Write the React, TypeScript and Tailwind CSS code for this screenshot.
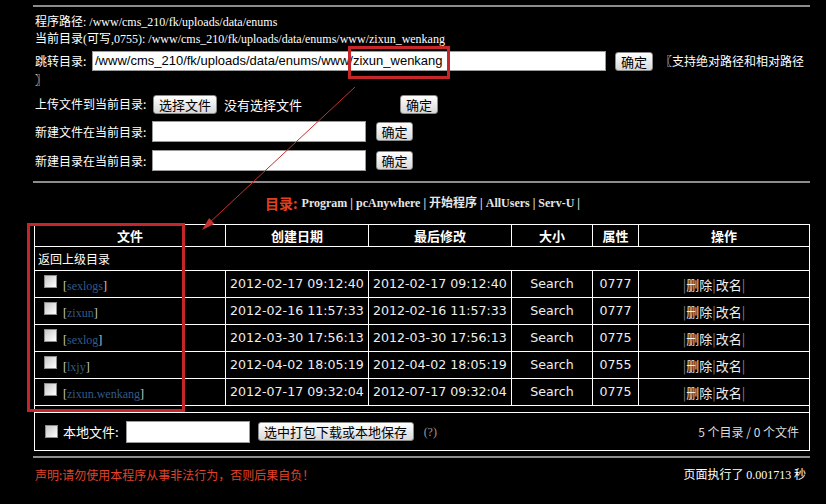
const rows = [
  { name: "sexlogs", date: "2012-02-17 09:12:40", mode: "0777" },
  { name: "zixun", date: "2012-02-16 11:57:33", mode: "0777" },
  { name: "sexlog", date: "2012-03-30 17:56:13", mode: "0775" },
  { name: "lxjy", date: "2012-04-02 18:05:19", mode: "0755" },
  { name: "zixun.wenkang", date: "2012-07-17 09:32:04", mode: "0775" },
];

const Btn = ({ children, w }: { children: string; w: string }) => (
  <button
    className={`${w} h-[19px] rounded-[3px] border border-[#8a8a8a] bg-gradient-to-b from-white to-[#d8d8d8] text-center font-['Noto_Sans_CJK_SC',sans-serif] text-[13px] leading-none text-black`}
  >
    {children}
  </button>
);

const Check = () => (
  <span className="inline-block h-[13px] w-[13px] border border-[#8c8c8c] bg-gradient-to-br from-[#c8c8c8] to-white" />
);

export default function App() {
  return (
    <div className="relative h-[504px] w-[826px] overflow-hidden bg-black font-['Noto_Sans_CJK_SC',sans-serif] text-[12px] text-white">
      <div className="ml-[33px] w-[777px] pt-[5px]">
        <div className="h-[2px] bg-[#8c8c8c]" />

        {/* PATH INFO */}
        <div className="pl-[2px] pt-[7px] font-['Liberation_Serif','Noto_Sans_CJK_SC',serif] text-[12px] leading-[17px]">
          <div>程序路径: /www/cms_210/fk/uploads/data/enums</div>
          <div>当前目录(可写,0755): /www/cms_210/fk/uploads/data/enums/www/zixun_wenkang</div>
        </div>

        {/* JUMP */}
        <div className="mt-[2px] flex h-[22px] items-center pl-[2px]">
          <span className="w-[57px] leading-none">跳转目录:</span>
          <div className="flex h-[20px] w-[514px] items-center border border-[#9a9a9a] bg-white pl-[2px] font-['Liberation_Sans',sans-serif] text-[13px] text-black">
            /www/cms_210/fk/uploads/data/enums/www/zixun_wenkang
          </div>
          <div className="ml-[9px]">
            <Btn w="w-[38px]">确定</Btn>
          </div>
          <span className="ml-[7px] leading-none">〖支持绝对路径和相对路径</span>
        </div>
        <div className="h-[16px] pl-[2px] leading-[16px]">〗</div>

        {/* UPLOAD */}
        <div className="mt-[5px] flex h-[22px] items-center pl-[2px]">
          <span className="w-[118px] leading-none">上传文件到当前目录:</span>
          <Btn w="w-[64px]">选择文件</Btn>
          <span className="ml-[7px] text-[13px] leading-none">没有选择文件</span>
          <div className="ml-[98px]">
            <Btn w="w-[38px]">确定</Btn>
          </div>
        </div>

        {/* NEW FILE */}
        <div className="mt-[5px] flex h-[23px] items-center pl-[2px]">
          <span className="w-[117px] leading-none">新建文件在当前目录:</span>
          <div className="h-[21px] w-[214px] border border-[#9a9a9a] bg-white" />
          <div className="ml-[10px]">
            <Btn w="w-[37px]">确定</Btn>
          </div>
        </div>

        {/* NEW DIR */}
        <div className="mt-[6px] flex h-[23px] items-center pl-[2px]">
          <span className="w-[117px] leading-none">新建目录在当前目录:</span>
          <div className="h-[21px] w-[214px] border border-[#9a9a9a] bg-white" />
          <div className="ml-[10px]">
            <Btn w="w-[37px]">确定</Btn>
          </div>
        </div>

        <div className="mt-[9px] h-[2px] bg-[#8c8c8c]" />

        {/* SHORTCUTS */}
        <div className="mt-[10px] flex h-[20px] items-center justify-center pl-[2px]">
          <span className="text-[14px] font-bold leading-none text-[#e0401f]">目录:</span>
          <span className="ml-[4px] font-['Liberation_Serif','Noto_Sans_CJK_SC',serif] text-[12px] font-bold leading-none text-[#e6e6e6]">
            Program | pcAnywhere | 开始程序 | AllUsers | Serv-U |
          </span>
        </div>

        {/* FILE TABLE */}
        <table className="ml-[1px] mt-[11px] w-[775px] table-fixed border-collapse border border-white">
          <colgroup>
            <col className="w-[191px]" />
            <col className="w-[143px]" />
            <col className="w-[143px]" />
            <col className="w-[81px]" />
            <col className="w-[46px]" />
            <col className="w-[171px]" />
          </colgroup>
          <thead>
            <tr className="h-[22px] text-[13px] font-bold leading-none">
              <th className="border border-white">文件</th>
              <th className="border border-white">创建日期</th>
              <th className="border border-white">最后修改</th>
              <th className="border border-white">大小</th>
              <th className="border border-white">属性</th>
              <th className="border border-white">操作</th>
            </tr>
          </thead>
          <tbody>
            <tr className="h-[24px]">
              <td colSpan={6} className="border border-white pl-[3px] text-[12px] leading-none">
                返回上级目录
              </td>
            </tr>
            {rows.map((r) => (
              <tr key={r.name} className="h-[27px] font-['DejaVu_Sans',sans-serif] text-[12.6px] leading-none text-[#eeeeee]">
                <td className="border border-white pl-[9px]">
                  <div className="flex items-start">
                    <span className="mt-[-2px]">
                      <Check />
                    </span>
                    <span className="ml-[6px] mt-[3px] font-['Liberation_Serif',serif] text-[12px] text-[#cccccc]">
                      [<span className="text-[#2f5b8a]">{r.name}</span>]
                    </span>
                  </div>
                </td>
                <td className="border border-white pl-[4px]">{r.date}</td>
                <td className="border border-white pl-[4px]">{r.date}</td>
                <td className="border border-white text-center">Search</td>
                <td className="border border-white text-center">{r.mode}</td>
                <td className="border border-white pr-[20px] text-center font-['Noto_Sans_CJK_SC',sans-serif] text-[13px]">
                  <span className="text-[#888]">|</span>删除<span className="text-[#888]">|</span>改名
                  <span className="text-[#888]">|</span>
                </td>
              </tr>
            ))}
            <tr className="h-[7px]">
              <td colSpan={6} className="border border-white p-0" />
            </tr>
            <tr className="h-[38px]">
              <td colSpan={6} className="border border-white px-[10px]">
                <div className="flex items-center">
                  <Check />
                  <span className="ml-[5px] text-[13px] leading-none">本地文件:</span>
                  <div className="ml-[7px] h-[22px] w-[124px] border border-[#9a9a9a] bg-white" />
                  <div className="ml-[8px]">
                    <Btn w="w-[156px]">选中打包下载或本地保存</Btn>
                  </div>
                  <span className="ml-[10px] font-['Liberation_Serif',serif] text-[12px] text-[#9a9a9a]">(?)</span>
                  <span className="ml-auto font-['Noto_Sans_CJK_SC',sans-serif] text-[12px] leading-none text-[#dddddd]">
                    5 个目录 / 0 个文件
                  </span>
                </div>
              </td>
            </tr>
          </tbody>
        </table>

        <div className="mt-[5px] h-[2px] bg-[#8c8c8c]" />

        {/* FOOTER */}
        <div className="mt-[8px] flex items-center justify-between pl-[2px] pr-[4px] text-[12px] leading-[16px]">
          <span className="text-[#e0432a]">声明:请勿使用本程序从事非法行为，否则后果自负！</span>
          <span>
            页面执行了 <span className="font-['Liberation_Serif',serif]">0.001713</span> 秒
          </span>
        </div>
      </div>

      {/* ANNOTATIONS */}
      <div className="absolute left-[348px] top-[46px] h-[33px] w-[102px] border-[3px] border-[#c4262a]" />
      <div className="absolute left-[27px] top-[223px] h-[189px] w-[158px] border-[3px] border-[#c4262a]" />
      <svg className="pointer-events-none absolute left-0 top-0" width="826" height="504">
        <line x1="355" y1="87" x2="208" y2="224" stroke="#c4312e" strokeWidth="1" />
        <polygon points="202,230 214.5,223.7 209.1,217.9" fill="#c4312e" />
      </svg>
    </div>
  );
}
